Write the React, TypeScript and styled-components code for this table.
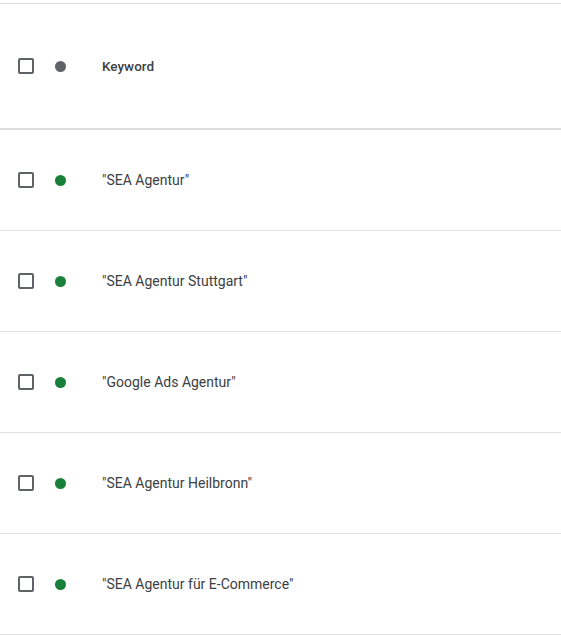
import React from 'react';
import styled, { createGlobalStyle } from 'styled-components';

const GlobalStyle = createGlobalStyle`
  body {
    margin: 0;
    background: #ffffff;
    font-family: Roboto, "Liberation Sans", Arial, sans-serif;
  }
`;

const Table = styled.div`
  padding-top: 3px;
  width: 561px;
`;

const Row = styled.div<{ $header?: boolean }>`
  display: flex;
  align-items: center;
  height: ${(p) => (p.$header ? '124px' : '100px')};
  border-top: ${(p) => (p.$header ? '1px solid #dadce0' : 'none')};
  border-bottom: ${(p) => (p.$header ? '2px solid #dadce0' : '1px solid #e0e0e0')};
  box-sizing: content-box;
`;

const Check = styled.span`
  width: 12px;
  height: 12px;
  border: 2px solid #5f6368;
  border-radius: 2px;
  margin-left: 18px;
  flex-shrink: 0;
`;

const Dot = styled.span<{ $color: string }>`
  width: 11px;
  height: 11px;
  border-radius: 50%;
  background: ${(p) => p.$color};
  margin-left: 21px;
  flex-shrink: 0;
`;

const Label = styled.span<{ $bold?: boolean }>`
  margin-left: 36px;
  font-size: ${(p) => (p.$bold ? '13.5px' : '14px')};
  font-weight: ${(p) => (p.$bold ? 500 : 400)};
  color: #3c4043;
`;

const keywords = [
  '"SEA Agentur"',
  '"SEA Agentur Stuttgart"',
  '"Google Ads Agentur"',
  '"SEA Agentur Heilbronn"',
  '"SEA Agentur für E-Commerce"',
];

const App: React.FC = () => {
  return (
    <>
      <GlobalStyle />
      <Table>
        <Row $header>
          <Check />
          <Dot $color="#5f6368" />
          <Label $bold>Keyword</Label>
        </Row>
        {keywords.map((k) => (
          <Row key={k}>
            <Check />
            <Dot $color="#188038" />
            <Label>{k}</Label>
          </Row>
        ))}
      </Table>
    </>
  );
};

export default App;
